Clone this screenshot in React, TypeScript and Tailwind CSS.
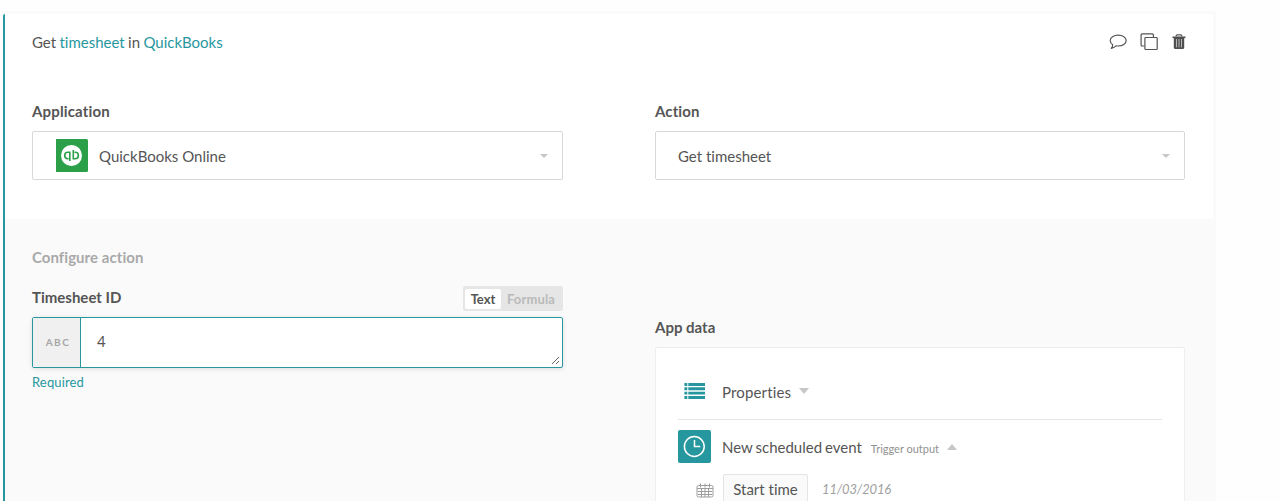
import React from "react";

const Caret = ({ up = false, className = "" }: { up?: boolean; className?: string }) => (
  <svg viewBox="0 0 10 5" preserveAspectRatio="none" className={className} fill="currentColor" aria-hidden="true">
    <path d={up ? "M0 5 5 0l5 5z" : "M0 0h10L5 5z"} />
  </svg>
);

const CommentIcon = () => (
  <svg width="18" height="16" viewBox="0 0 18 16" fill="none" stroke="#555" strokeWidth="1.2" strokeLinejoin="round">
    <path d="M9.200 1.200c4.500 0 8 2.400 8 5.400s-3.500 5.400-8 5.400c-.8 0-1.500-.1-2.200-.2-1.100 1.200-2.600 2-4.700 2.500.9-1 1.400-2 1.400-3.500C2.100 9.800 1.200 8.300 1.200 6.600c0-3 3.500-5.400 8-5.400z" />
  </svg>
);

const CopyIcon = () => (
  <svg width="18" height="18" viewBox="0 0 18 18" fill="none" stroke="#555" strokeWidth="1.200">
    <path d="M4.500 13H2.100a1 1 0 0 1-1-1V1.900a1 1 0 0 1 1-1h10.300a1 1 0 0 1 1 1v2.300" />
    <rect x="4.900" y="4.500" width="12.300" height="12" rx=".8" />
  </svg>
);

const TrashIcon = () => (
  <svg width="14" height="16" viewBox="0 0 14 16" fill="none">
    <path d="M4.200 2.500v-.8a.9.9 0 0 1 .9-.9h3.800a.9.9 0 0 1 .9.900v.8" stroke="#555" strokeWidth="1.200" />
    <path d="M.5 2.500h13v1.600h-13z" fill="#4f4f4f" />
    <path d="M1.800 4h10.400v9.500a1.500 1.500 0 0 1-1.500 1.500H3.300a1.500 1.500 0 0 1-1.500-1.500z" fill="#4f4f4f" />
    <path d="M4.500 5v8.300M7 5v8.300M9.500 5v8.300" stroke="#c4c4c4" strokeWidth=".9" />
  </svg>
);

const QuickBooksIcon = () => (
  <svg width="32" height="33" viewBox="0 0 32 33" fill="none">
    <path d="M0 0h30.500a1.500 1.500 0 0 1 1.500 1.500v30a1.500 1.500 0 0 1-1.500 1.500H0z" fill="#2ca048" />
    <circle cx="15.500" cy="16.500" r="10.500" fill="#fff" />
    <path d="M13.800 22v-8.700h-1.900a3.200 3.200 0 0 0 0 6.400h.7M17.300 11v8.700h1.900a3.200 3.200 0 0 0 0-6.400h-.7" stroke="#2ca048" strokeWidth="1.600" />
  </svg>
);

const ListIcon = () => (
  <svg width="21" height="16" viewBox="0 0 21 16" fill="#27979f" className="ml-[6px]">
    <path d="M.4 0h2.900v2.900H.4zM4.300 0H21v2.900H4.300zM.4 4.300h2.900v2.900H.4zM4.300 4.300H21v2.900H4.300zM.4 8.700h2.900v2.900H.4zM4.300 8.700H21v2.900H4.300zM.4 13h2.900v2.900H.4zM4.300 13H21v2.900H4.300z" />
  </svg>
);

const ClockIcon = () => (
  <span className="flex size-[33px] items-center justify-center rounded-[2px] bg-[#27979f]">
    <svg width="23" height="23" viewBox="0 0 23 23" fill="none" stroke="#fff" strokeWidth="1.500">
      <circle cx="11.300" cy="11.500" r="9.900" />
      <path d="M11.500 5v6.500h5.700" />
    </svg>
  </span>
);

const CalendarIcon = () => (
  <svg width="18" height="15" viewBox="0 0 18 15" fill="none" stroke="#9d9d9d" strokeWidth="1">
    <rect x="1" y="2.500" width="16" height="11.500" rx="1.500" />
    <path d="M4.500 .5v4M9 .5v4M13.500 .5v4" />
    <path d="M1 5.500h16M2 8.500h14M2 11.500h14M5.500 6v8M9 6v8M12.500 6v8" />
  </svg>
);

export default function App() {
  return (
    <div className="h-[501px] overflow-hidden bg-[#fefefe] pt-[11px] pl-[3px] font-['Lato',sans-serif] text-[15px] leading-5 text-[#555] [font-variant-ligatures:none]">
      <main className="flex h-[490px] w-[1213px] flex-col rounded-t-[2px] bg-[#fafafa] pt-[3px]">
        <div className="flex min-h-0 grow flex-col rounded-tl-[2px] border-l-2 border-[#27979f]">
          <section className="mr-[3px] h-[205px] shrink-0 bg-white px-[27px]">
            <header className="flex h-[56px] items-center justify-between">
              <h1 className="[word-spacing:-0.5px]">
                Get <a className="text-[#27979f]">timesheet</a> in <a className="text-[#27979f]">QuickBooks</a>
              </h1>
              <div className="flex items-center">
                <CommentIcon />
                <span className="ml-[13px] pb-px"><CopyIcon /></span>
                <span className="ml-[14px]"><TrashIcon /></span>
              </div>
            </header>
            <div className="mr-px flex justify-between pt-[31px]">
              <label className="flex w-[531px] flex-col gap-[10px]">
                <span className="font-bold tracking-[0.15px]">Application</span>
                <span className="flex h-[49px] items-center rounded-[2px] border border-[#d7d8d9] pr-[14px] pl-[23px]">
                  <QuickBooksIcon />
                  <span className="ml-[11px] grow">QuickBooks Online</span>
                  <Caret className="h-1 w-2 text-[#c7c7c7]" />
                </span>
              </label>
              <label className="flex w-[530px] flex-col gap-[10px]">
                <span className="font-bold tracking-[0.1px]">Action</span>
                <span className="flex h-[49px] items-center rounded-[2px] border border-[#d7d8d9] pr-[14px] pl-[22px]">
                  <span className="grow">Get timesheet</span>
                  <Caret className="h-1 w-2 text-[#c7c7c7]" />
                </span>
              </label>
            </div>
          </section>
          <section className="flex min-h-0 grow justify-between pr-[31px] pl-[27px]">
            <div className="w-[531px] pt-[28px]">
              <h2 className="font-bold text-[#a9a9a9] [font-variant-ligatures:normal] tracking-[0.05px]">Configure action</h2>
              <div className="mt-[19px] flex h-[25px] items-center justify-between">
                <label htmlFor="timesheet" className="-mt-[3px] font-bold">Timesheet ID</label>
                <div className="flex h-[25px] w-[100px] rounded-[2px] bg-[#e6e6e6] p-[2px] pt-[3px] text-[13px] font-bold">
                  <button className="h-5 w-9 rounded-[2px] bg-white">Text</button>
                  <button className="h-5 grow tracking-[0.15px] text-[#bababa]">Formula</button>
                </div>
              </div>
              <div className="mt-[6px] flex h-[51px] rounded-[2px] border border-[#27979f] bg-white shadow-[0_1px_5px_rgba(0,0,0,0.12)]">
                <span className="flex w-12 shrink-0 items-center justify-center border-r border-[#27979f] bg-[#f0f0f0] pb-px pl-[3px] text-[10px] font-bold tracking-[1.5px] text-[#a6a6a6]">ABC</span>
                <textarea id="timesheet" defaultValue="4" className="mr-[2px] h-[47px] grow resize overflow-hidden px-4 pt-[13px] outline-none" />
              </div>
              <p className="mt-1 text-[13px] tracking-[0.15px] text-[#27979f]">Required</p>
            </div>
            <div className="w-[530px] pt-[98px]">
              <h2 className="font-bold">App data</h2>
              <div className="mt-[10px] h-[170px] rounded-[2px] border border-[#eeeeee] bg-white px-[22px] pt-[27px]">
                <div className="flex h-[45px] items-start border-b border-[#e5e5e5]">
                  <span className="flex w-[44px] pt-[8px]"><ListIcon /></span>
                  <span className="pt-[7px] tracking-[0.15px]">Properties</span>
                  <Caret className="mt-[13px] ml-2 h-[6px] w-[10px] text-[#c7c7c7]" />
                </div>
                <div className="mt-[10px] flex h-[33px] items-center">
                  <ClockIcon />
                  <span className="ml-[11px] [word-spacing:-0.9px]">New scheduled event</span>
                  <span className="mt-[5px] ml-[9px] text-[11px] text-[#919191]">Trigger output</span>
                  <Caret up className="ml-2 h-[6px] w-[10px] text-[#c7c7c7]" />
                </div>
                <div className="mt-[11px] flex h-[31px] items-center">
                  <span className="ml-[18px] pt-px"><CalendarIcon /></span>
                  <span className="ml-[9px] flex h-[31px] w-[85px] items-center justify-center rounded-[2px] border border-[#e5e5e5] bg-[#fafafa] pb-[2px]">Start time</span>
                  <span className="ml-[14px] pb-px text-[13px] tracking-[-0.15px] text-[#a0a0a0] italic">11/03/2016</span>
                </div>
              </div>
            </div>
          </section>
        </div>
      </main>
    </div>
  );
}
